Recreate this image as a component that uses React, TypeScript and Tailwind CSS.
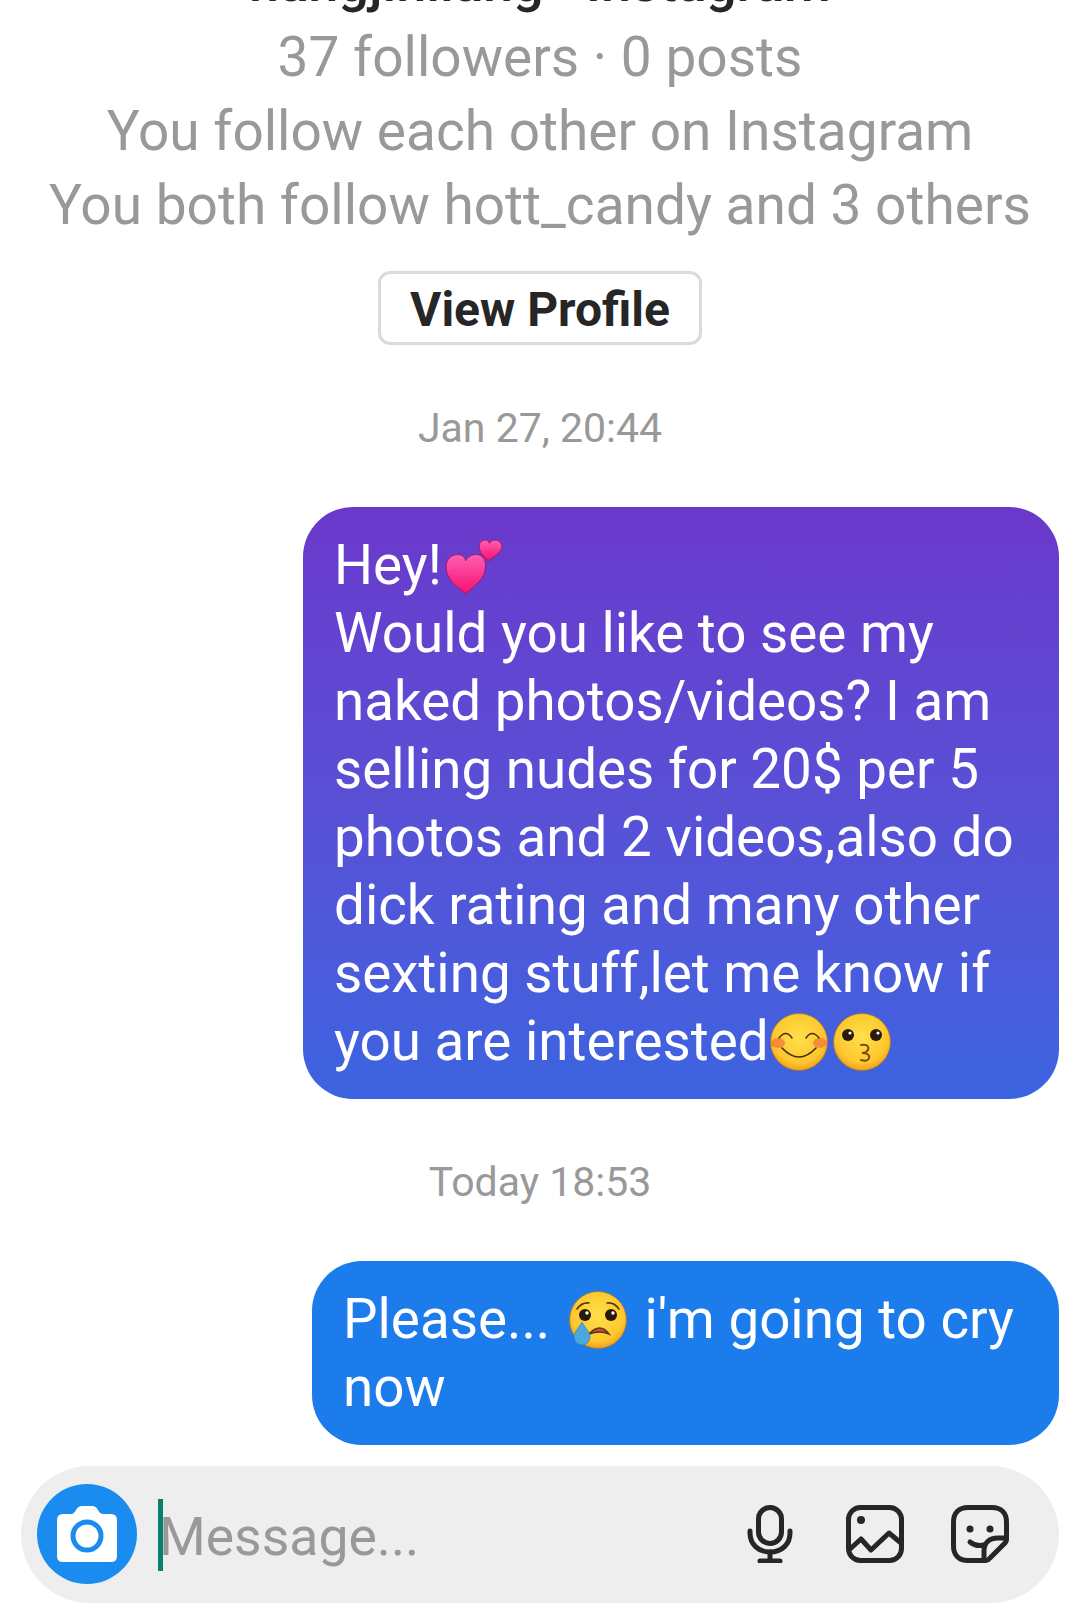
import React from 'react';

function Hearts() {
  return (
    <svg viewBox="0 0 56 56" className="inline-block w-[58px] h-[58px] align-[-12px] ml-[3px]">
      <defs>
        <linearGradient id="hrt" x1="0" y1="0" x2="0" y2="1">
          <stop offset="0" stopColor="#ff5fb4" />
          <stop offset="1" stopColor="#f5106e" />
        </linearGradient>
      </defs>
      <path d="M20 54 C10 46 1 39 1 28 C1 20 7 16 12 16 C16 16 19 18 20 22 C22 18 26 16 30 16 C36 16 40 21 39 28 C39 39 29 46 20 54Z" fill="url(#hrt)" stroke="#a01050" strokeWidth="0.8" />
      <path d="M42 22 C37 18 33 14 33 8 C33 4 36 2 39 2 C41 2 42 3 43 5 C44 3 46 2 48 2 C52 2 55 5 55 8 C55 14 47 18 42 22Z" fill="url(#hrt)" stroke="#a01050" strokeWidth="0.8" />
    </svg>
  );
}

function Face({ children }: { children: React.ReactNode }) {
  return (
    <svg viewBox="0 0 60 60" className="inline-block w-[60px] h-[60px] align-[-12px]">
      <defs>
        <radialGradient id="face" cx="0.5" cy="0.42" r="0.6">
          <stop offset="0" stopColor="#ffe04a" />
          <stop offset="0.75" stopColor="#fdc72e" />
          <stop offset="1" stopColor="#f09a1a" />
        </radialGradient>
      </defs>
      <circle cx="30" cy="30" r="28.5" fill="url(#face)" stroke="#a8752a" strokeWidth="0.8" />
      {children}
    </svg>
  );
}

function SmileFace() {
  return (
    <Face>
      <ellipse cx="9" cy="31" rx="7" ry="5" fill="#f5703a" opacity="0.7" />
      <ellipse cx="51" cy="31" rx="7" ry="5" fill="#f5703a" opacity="0.7" />
      <path d="M10 26 Q17 17 23 26 M37 26 Q43 17 50 26" fill="none" stroke="#4a2c10" strokeWidth="1.5" strokeLinecap="round" />
      <path d="M13 36 Q30 54 47 36" fill="none" stroke="#4a2c10" strokeWidth="1.7" strokeLinecap="round" />
    </Face>
  );
}

function KissFace() {
  return (
    <Face>
      <circle cx="16" cy="23" r="6" fill="#2a1a0c" />
      <circle cx="44" cy="23" r="6" fill="#2a1a0c" />
      <circle cx="18" cy="21" r="1.6" fill="#fff" />
      <circle cx="46" cy="21" r="1.6" fill="#fff" />
      <path d="M29 33 Q38 32 36 38 Q34 41 30 41 Q38 41 37 46 Q36 50 29 48" fill="none" stroke="#7a4a12" strokeWidth="2" strokeLinecap="round" />
    </Face>
  );
}

function CryFace() {
  return (
    <Face>
      <path d="M9 19 Q14 12 21 13 M39 13 Q46 12 51 19" fill="none" stroke="#5a3410" strokeWidth="1.6" strokeLinecap="round" />
      <circle cx="17" cy="25" r="6" fill="#2a1a0c" />
      <circle cx="43" cy="25" r="6" fill="#2a1a0c" />
      <circle cx="19" cy="23" r="1.7" fill="#fff" />
      <circle cx="45" cy="23" r="1.7" fill="#fff" />
      <path d="M21 44 Q32 32 41 44 Q32 40 21 44Z" fill="#c8503a" stroke="#5a3410" strokeWidth="1.4" />
      <path d="M14 32 C10 39 6 42 6 47 A7.5 7.5 0 0 0 22 47 C22 42 18 39 14 32Z" fill="#4aa8de" stroke="#2f7fb0" strokeWidth="0.6" />
    </Face>
  );
}

function CameraIcon() {
  return (
    <svg viewBox="0 0 60 58" className="w-[60px] h-[58px]">
      <path d="M6 9 H14 Q17 9 19 5 Q21 1 25 1 H35 Q39 1 41 5 Q43 9 46 9 H54 Q60 9 60 15 V51 Q60 57 54 57 H6 Q0 57 0 51 V15 Q0 9 6 9Z" fill="#fff" />
      <circle cx="30" cy="31" r="14" fill="none" stroke="#1a8cf0" strokeWidth="5" />
    </svg>
  );
}

function MicIcon() {
  return (
    <svg viewBox="0 0 46 58" className="w-[46px] h-[58px]" fill="none" stroke="#262626" strokeWidth="5" strokeLinecap="round">
      <rect x="11.5" y="2.5" width="23" height="36" rx="11.5" />
      <path d="M3 26 V28 C3 39 11 47 23 47 C35 47 43 39 43 28 V26" />
      <path d="M23 47 V56 M13 56 H33" />
    </svg>
  );
}

function ImageIcon() {
  return (
    <svg viewBox="0 0 58 58" className="w-[58px] h-[58px]" fill="none" stroke="#262626" strokeWidth="5" strokeLinejoin="round">
      <rect x="2.5" y="2.5" width="53" height="53" rx="12" />
      <circle cx="15" cy="15" r="4" fill="#262626" stroke="none" />
      <path d="M4 44 L15 34 L25 45 L43 28 L55 38" strokeLinecap="round" />
    </svg>
  );
}

function StickerIcon() {
  return (
    <svg viewBox="0 0 58 58" className="w-[58px] h-[58px]" fill="none" stroke="#262626" strokeWidth="5" strokeLinecap="round" strokeLinejoin="round">
      <path d="M35 55.5 H17 C8 55.5 2.5 50 2.5 41 V17 C2.5 8 8 2.5 17 2.5 H41 C50 2.5 55.5 8 55.5 17 V34 Q55.5 37 53 39 L39 53 Q37 55.5 35 55.5Z" />
      <path d="M55 33 H47 C38 33 33 38 33 46 V55" />
      <path d="M19 37 Q25 42 33 40" />
      <circle cx="19" cy="24" r="3.5" fill="#262626" stroke="none" />
      <circle cx="39" cy="24" r="3.5" fill="#262626" stroke="none" />
    </svg>
  );
}

export default function App() {
  return (
    <div className="w-[1080px] h-[1624px] bg-white overflow-hidden flex flex-col font-['Roboto',sans-serif]">
      {/* profile header, top is cut off by the screenshot */}
      <div className="flex flex-col items-center -mt-[54px]">
        <div className="text-[54px] leading-[74px] font-medium text-[#262626] whitespace-nowrap">nangjinliang · Instagram</div>
        <div className="text-[55px] leading-[74px] text-[#999999] whitespace-nowrap">37 followers · 0 posts</div>
        <div className="text-[55px] leading-[74px] text-[#999999] whitespace-nowrap">You follow each other on Instagram</div>
        <div className="text-[55px] leading-[74px] text-[#999999] whitespace-nowrap">You both follow hott_candy and 3 others</div>
        <div className="mt-[29px] w-[324px] h-[74px] rounded-[12px] border-[3px] border-[#dbdbdb] flex items-center justify-center text-[48px] font-bold text-[#262626] pt-[4px]">View Profile</div>
      </div>

      <div className="mt-[59px] text-center text-[41px] leading-[48px] text-[#999999]">Jan 27, 20:44</div>

      <div className="mt-[55px] ml-[303px] w-[756px] h-[592px] rounded-[50px] bg-gradient-to-b from-[#6a38cb] to-[#3b64e0] pl-[31px] pt-[24px] text-white text-[54.75px] leading-[68px]">
        <div>Hey!<Hearts /></div>
        <div>Would you like to see my</div>
        <div>naked photos/videos? I am</div>
        <div>selling nudes for 20$ per 5</div>
        <div>photos and 2 videos,also do</div>
        <div>dick rating and many other</div>
        <div>sexting stuff,let me know if</div>
        <div>you are interested<SmileFace /><span className="inline-block w-[3px]" /><KissFace /></div>
      </div>

      <div className="mt-[59px] text-center text-[41px] leading-[48px] text-[#999999]">Today 18:53</div>

      <div className="mt-[55px] ml-[312px] w-[747px] h-[184px] rounded-[50px] bg-[#1c7ceb] pl-[31px] pt-[24px] text-white text-[54.75px] leading-[68px]">
        <div>Please... <span className="inline-block w-[4px]" /><CryFace /><span className="inline-block w-[3px]" /> i'm going to cry</div>
        <div>now</div>
      </div>

      <div className="mt-[21px] mx-[21px] h-[137px] rounded-[69px] bg-[#eeeeee] flex items-center">
        <div className="ml-[16px] w-[100px] h-[100px] rounded-full bg-[#1a8cf0] flex items-center justify-center -mt-[2px]">
          <CameraIcon />
        </div>
        <div className="ml-[21px] w-[5px] h-[72px] bg-[#0b8070]" />
        <div className="flex-1 text-[53.5px] text-[#999999] -ml-[4px] mt-[6px]">Message...</div>
        <div className="mr-[50px] flex items-center -mt-[2px]">
          <MicIcon />
          <div className="ml-[53px]"><ImageIcon /></div>
          <div className="ml-[47px]"><StickerIcon /></div>
        </div>
      </div>
    </div>
  );
}
